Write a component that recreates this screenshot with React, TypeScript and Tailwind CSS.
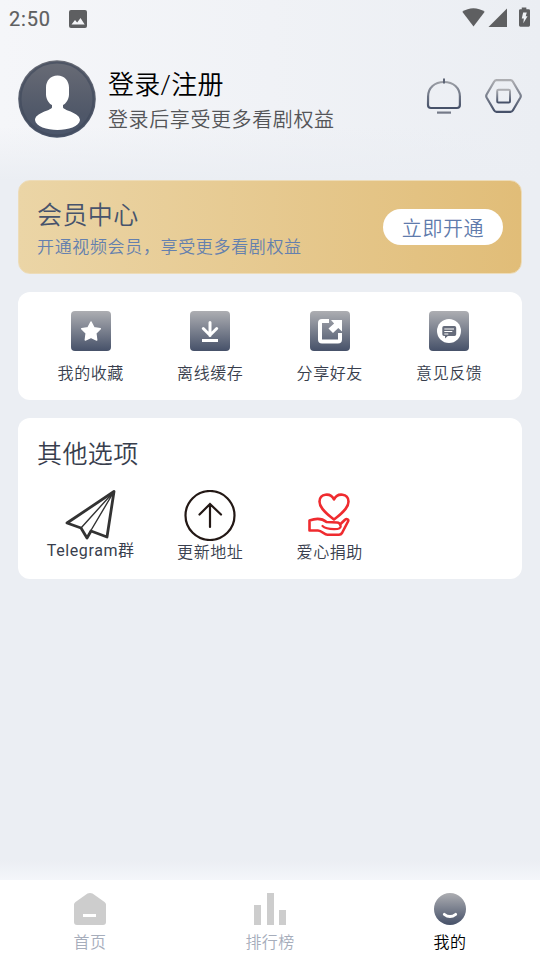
import type { ReactNode } from "react";

function Defs() {
  return (
    <svg className="absolute h-0 w-0" aria-hidden="true">
      <defs>
        <linearGradient id="steel" x1="0" y1="0" x2="0" y2="1">
          <stop offset="0" stopColor="#adaeb2" />
          <stop offset="1" stopColor="#465169" />
        </linearGradient>
        <linearGradient id="bell" gradientUnits="userSpaceOnUse" x1="0" y1="2" x2="0" y2="31">
          <stop offset="0" stopColor="#a5a7ac" />
          <stop offset="1" stopColor="#465169" />
        </linearGradient>
        <linearGradient id="avatar" x1="0" y1="0" x2="0" y2="1">
          <stop offset="0" stopColor="#696c76" />
          <stop offset="0.7" stopColor="#4f5768" />
          <stop offset="1" stopColor="#4a556b" />
        </linearGradient>
      </defs>
    </svg>
  );
}

function StatusBar() {
  return (
    <div className="flex h-9 items-center pl-[9px] pr-[10px] text-[#5e5f61]">
      <span className="pt-px font-[Roboto] text-[20px] font-normal leading-none tracking-[0.8px] [-webkit-text-stroke:0.2px_#5e5f61]">2:50</span>
      <svg className="ml-[18px] mt-px" width="18" height="18" viewBox="0 0 18 18">
        <rect width="18" height="18" rx="2" fill="currentColor" />
        <path d="M2.500 14.500 6 10l2.200 2.600L11.500 8l4.200 6.500z" fill="#f4f5f8" />
      </svg>
      <svg className="-mt-px ml-auto" width="23" height="19" viewBox="0 0 23 19">
        <path d="M.3 3.700C6.800-1 16-1 22.700 3.700L11.500 18.600z" fill="currentColor" />
      </svg>
      <svg className="-mt-px ml-[3px]" width="19" height="19" viewBox="0 0 19 19">
        <path d="M19 .5V19H.5z" fill="currentColor" />
      </svg>
      <svg className="-mt-[2px] ml-3" width="11" height="20" viewBox="0 0 12 21">
        <path d="M3 0h5v2h2.500Q12 2 12 3.500v16q0 1.500-1.500 1.500h-9Q0 21 0 19.500v-16Q0 2 1.500 2H3z" fill="currentColor" />
        <path d="M4.500 5.500h4L7.300 9.800H9.300L4.700 17.300 5.300 12H3z" fill="#eef1f5" />
      </svg>
    </div>
  );
}

function Header() {
  return (
    <header className="mt-6 flex h-[78px] items-center px-[18px]">
      <svg width="78" height="78" viewBox="0 0 78 78">
        <circle cx="39" cy="39" r="38.800" fill="url(#avatar)" />
        <circle cx="39" cy="39" r="36.500" fill="none" stroke="#414a5c" strokeOpacity=".65" strokeWidth="2" />
        <path d="M39.500 15.500c7 0 11.500 5.500 11.500 12v7c0 5-3.500 9.500-6 10.500v2.500c2 3.500 16.500 5 17 12.500-.5 6.500-12 10-22.500 10s-22-3.500-22.500-10c.5-7.500 15-9 17-12.500V45c-2.500-1-6-5.500-6-10.500v-7c0-6.500 4.500-12 11.500-12z" fill="#fff" />
      </svg>
      <div className="ml-3 pt-[6px]">
        <h1 className="text-[26px] leading-8 tracking-[0.3px] text-black">登录/注册</h1>
        <p className="mt-[3px] text-[20px] leading-8 tracking-[0.6px] text-[#545558]">登录后享受更多看剧权益</p>
      </div>
      <svg className="-mt-[6px] ml-auto mr-[23px]" width="36" height="38" viewBox="0 0 36 38" fill="none" stroke="url(#bell)" strokeWidth="2.200">
        <path d="M2.100 19.500C2.100 11 8.500 5 18 5s15.900 6 15.900 14.500V28q0 3-3 3H5q-3 0-3-3z" />
        <path d="M17 1.500h2v5h-2z" fill="#5d6475" stroke="none" />
        <path d="M11 34.500h14v2.200H11z" fill="#747a88" stroke="none" />
      </svg>
      <svg className="-mt-[7px]" width="37" height="34" viewBox="0 0 37 34" fill="none" stroke="url(#steel)" strokeWidth="2.200">
        <path d="M11.500 1.200h14q1.500 0 2.300 1.300l7.600 13q.8 1.500 0 3l-7.600 13q-.8 1.300-2.300 1.300h-14q-1.500 0-2.300-1.300l-7.600-13q-.8-1.500 0-3l7.600-13q.8-1.300 2.300-1.300z" />
        <rect x="12.200" y="10.800" width="12.800" height="12.600" rx="1.200" strokeWidth="2" />
      </svg>
    </header>
  );
}

function VipCard() {
  return (
    <section className="flex h-[94px] items-center rounded-[12px] border border-[#eddcb9] bg-linear-to-r from-[#ebd5a6] to-[#e1bd78] px-[18px]">
      <div className="pt-[6px]">
        <h2 className="text-[25px] leading-8 tracking-[0.4px] text-[#47536c]">会员中心</h2>
        <p className="mt-px text-[17px] leading-7 tracking-[0.65px] text-[#6480ae]">开通视频会员，享受更多看剧权益</p>
      </div>
      <button className="ml-auto h-9 w-[120px] rounded-full bg-white pt-[3px] text-[20px] tracking-[0.6px] text-[#5f7bac]">
        立即开通
      </button>
    </section>
  );
}

function Tile({ children }: { children: ReactNode }) {
  return (
    <svg width="40" height="40" viewBox="0 0 40 40">
      <rect width="40" height="40" rx="4" fill="url(#steel)" />
      {children}
    </svg>
  );
}

const shortcuts = [
  {
    label: "我的收藏",
    icon: (
      <path
        d="m20 11 2.900 5.700 6.400 1.100-4.500 4.500.9 6.700-5.700-2.600-5.700 2.600.9-6.700-4.500-4.500 6.400-1.100z"
        fill="#fff"
        stroke="#fff"
        strokeWidth="1.500"
        strokeLinejoin="round"
      />
    ),
  },
  {
    label: "离线缓存",
    icon: (
      <g fill="none" stroke="#fff" strokeWidth="3">
        <path d="M20 11.500v13M13.300 17.500l6.700 6.700 6.700-6.700" strokeLinecap="round" />
        <path d="M12 29.500h16" />
      </g>
    ),
  },
  {
    label: "分享好友",
    icon: (
      <>
        <path d="M19 10h-7q-2 0-2 2v16.500q0 2 2 2h16q2 0 2-2V22" fill="none" stroke="#fff" strokeWidth="4" />
        <path d="M21 9h11v11.500l-3.700-3.600-5.300 5-4.500-4.500 5.600-5z" fill="#fff" />
      </>
    ),
  },
  {
    label: "意见反馈",
    icon: (
      <>
        <circle cx="20" cy="20" r="12" fill="#fff" />
        <path d="M15 15h10.500q1.700 0 1.700 1.700v6.600q0 1.700-1.700 1.700h-6.700L16 27.500V25h-1q-1.700 0-1.700-1.700v-6.600Q13.300 15 15 15z" fill="#666c7b" />
        <path d="M15.300 18h9.700M15.300 20.500h8M15.300 23h4" stroke="#fff" strokeWidth="1.100" />
      </>
    ),
  },
];

function Shortcuts() {
  return (
    <section className="grid h-[108px] grid-cols-4 rounded-[12px] bg-white px-[13px] pt-[19px]">
      {shortcuts.map((s) => (
        <div key={s.label} className="flex flex-col items-center">
          <Tile>{s.icon}</Tile>
          <span className="mt-[11px] text-[16px] leading-6 tracking-[0.6px] text-[#383e4d]">{s.label}</span>
        </div>
      ))}
    </section>
  );
}

function OtherOptions() {
  return (
    <section className="h-[161px] rounded-[12px] bg-white px-[13px] pt-[21px]">
      <h2 className="pl-[6px] text-[25px] leading-8 tracking-[0.4px] text-[#383e4d]">其他选项</h2>
      <div className="mt-[19px] grid grid-cols-4 text-[16px] leading-6 tracking-[0.6px] text-[#383e4d]">
        <div className="flex flex-col items-center">
          <svg width="51" height="50" viewBox="0 0 51 50" fill="none" stroke="#333" strokeLinejoin="round">
            <path d="M49 1.500 2 33l14 5 6 10 4-7 16 6z" strokeWidth="2.800" />
            <path d="M49 1.500 16 38M49 1.500 25 42" strokeWidth="1.400" />
          </svg>
          <span className="-mt-px font-normal">Telegram群</span>
        </div>
        <div className="flex flex-col items-center">
          <svg width="52" height="51" viewBox="0 0 52 51" fill="none" stroke="#231815">
            <circle cx="26" cy="25.500" r="24.500" strokeWidth="2.200" />
            <path d="M26 37V14.500M15.500 24.500 26 14l11 10.500" strokeWidth="2.200" strokeLinecap="round" />
          </svg>
          <span>更新地址</span>
        </div>
        <div className="flex flex-col items-center">
          <svg width="44" height="51" viewBox="0 0 44 51" fill="none" stroke="#ef2b2f" strokeWidth="2.600" strokeLinejoin="round" strokeLinecap="round">
            <path d="M26 29.500C20 25 11.500 18.500 11.500 11.500c0-8 11-9.500 14.500-2 3.500-7.500 14.500-6 14.500 2C40.500 18.500 32 25 26 29.500z" />
            <path d="M1.500 30.500c5.500-2 12.500-2.300 17 1.500l10.500.5c1.700.2 2.800 1 3 2l5-4.800c1.800-1.400 4-.3 3 1.800L34 43q-1 1.800-3 1.800H19.500c-3.500 0-5.500-4.300-9.500-4.300H1.500z" />
            <path d="M14.500 36c3 3 7 3.500 15 3 3-.5 4-2.500 2.500-4.500" strokeWidth="2.200" />
          </svg>
          <span>爱心捐助</span>
        </div>
      </div>
    </section>
  );
}

function TabBar() {
  return (
    <nav className="grid h-20 grid-cols-3 bg-white pt-[13px] text-[16px] leading-6 tracking-[0.4px] text-[#a6adbb]">
      <div className="flex flex-col items-center">
        <svg width="32" height="32" viewBox="0 0 32 32">
          <path d="M13.500.5q2.500-1 5 0L30.500 9Q32 10 32 11.500V29q0 3-3 3H3q-3 0-3-3V11.500Q0 10 1.500 9z" fill="#cdcdcd" />
          <path d="M9 21h13v3H9z" fill="#fff" />
        </svg>
        <span className="mt-[6px]">首页</span>
      </div>
      <div className="flex flex-col items-center">
        <svg width="32" height="32" viewBox="0 0 32 32" fill="#cdcdcd">
          <path d="M0 12h7v20H0zM13 0h7v32h-7zM25 17h7v15h-7z" />
        </svg>
        <span className="mt-[6px]">排行榜</span>
      </div>
      <div className="flex flex-col items-center text-black">
        <svg width="32" height="32" viewBox="0 0 32 32">
          <circle cx="16" cy="16" r="16" fill="url(#steel)" />
          <path d="M10.300 21.300q5.700 4.500 11.400 0" fill="none" stroke="#fff" strokeWidth="2.800" strokeLinecap="round" />
        </svg>
        <span className="mt-[6px]">我的</span>
      </div>
    </nav>
  );
}

export default function App() {
  return (
    <div className="relative flex h-[960px] w-[540px] flex-col overflow-hidden bg-[#ebeef3] font-[Roboto,'Noto_Sans_CJK_SC',sans-serif] font-[350]">
      <Defs />
      <div className="h-[180px] bg-[linear-gradient(to_bottom,transparent_70%,#ebeef3),linear-gradient(to_right,#f5f6f9,#ebeef3)]">
        <StatusBar />
        <Header />
      </div>
      <main className="flex flex-1 flex-col gap-[18px] px-[18px]">
        <VipCard />
        <Shortcuts />
        <OtherOptions />
      </main>
      <div className="h-5 bg-linear-to-b from-[#ebeef3] to-[#f4f6fa]" />
      <TabBar />
    </div>
  );
}
